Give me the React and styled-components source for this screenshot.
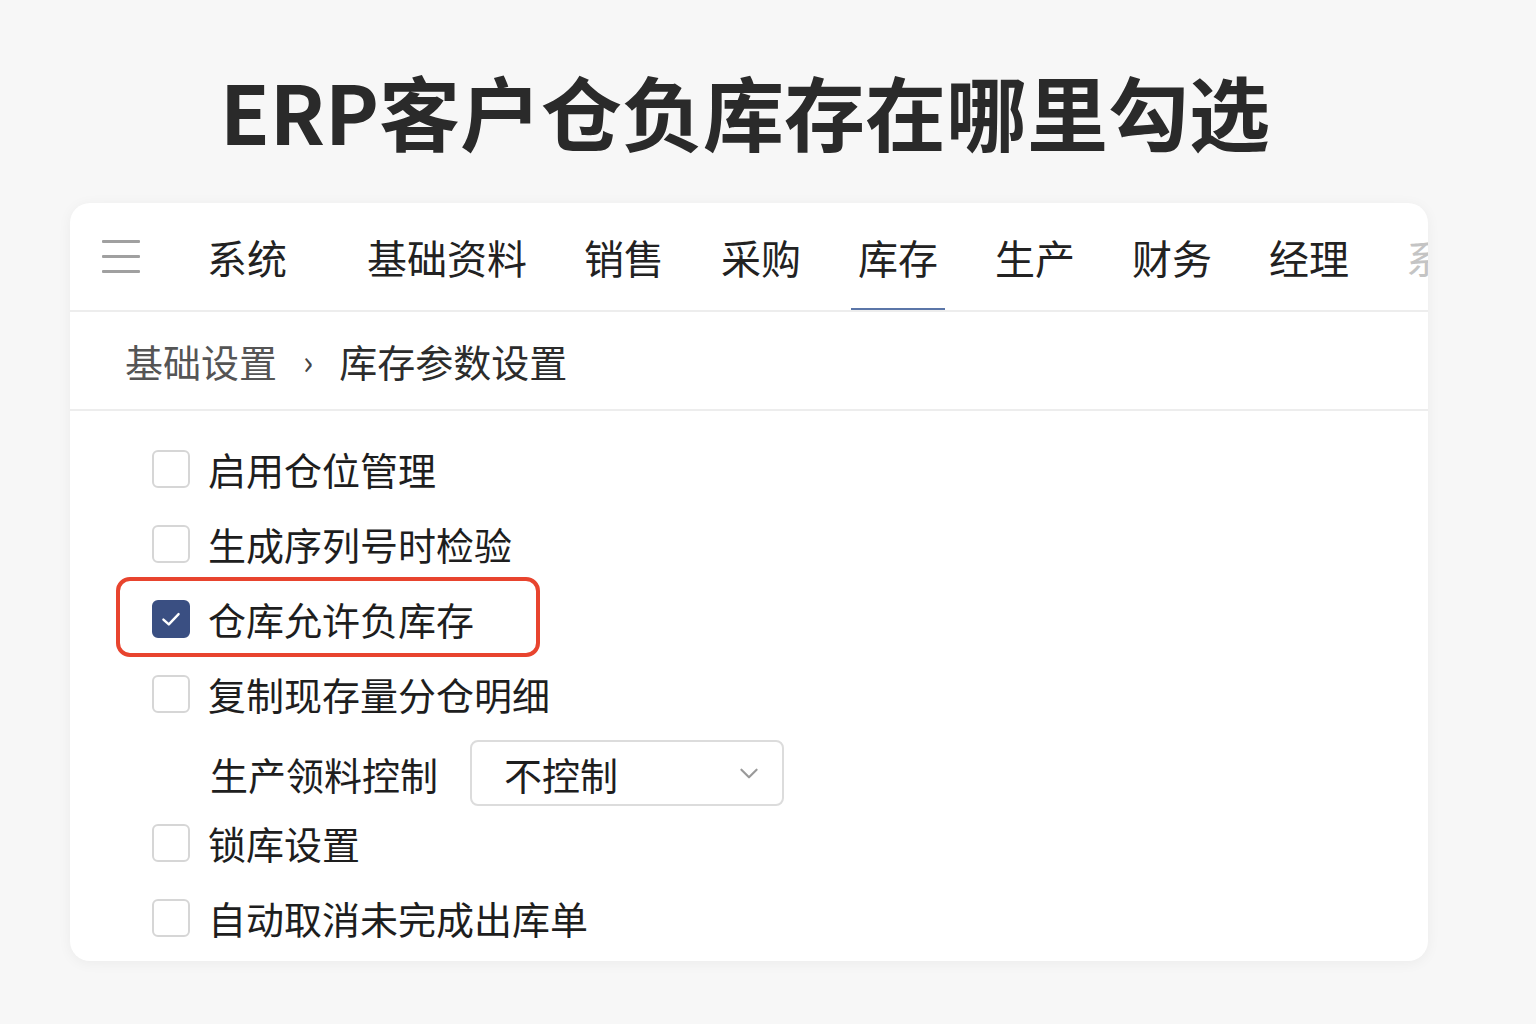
import React from 'react';
import styled, {createGlobalStyle} from 'styled-components';

const GlobalStyle = createGlobalStyle`
	body {
		margin: 0;
		background: #f7f7f7;
		font-family: "Noto Sans CJK SC", "Noto Sans", sans-serif;
		color: #222;
	}
`;

const tabs = ['系统', '基础资料', '销售', '采购', '库存', '生产', '财务', '经理'];

const options = [
	{label: '启用仓位管理'},
	{label: '生成序列号时检验'},
	{label: '仓库允许负库存', checked: true, marked: true},
	{label: '复制现存量分仓明细'},
	{select: true, label: '生产领料控制', value: '不控制'},
	{label: '锁库设置'},
	{label: '自动取消未完成出库单'},
];

const Check = ({checked}) => (
	<Box $checked={checked}>
		{checked && (
			<svg width='26' height='26' viewBox='0 0 24 24' fill='none' stroke='#fff' strokeWidth='2.2' strokeLinecap='round' strokeLinejoin='round'>
				<polyline points='5 12.5 10 17 19 7.5' />
			</svg>
		)}
	</Box>
);

const App = () => {
	return (
		<>
			<GlobalStyle />
			<Page>
				<Title>ERP客户仓负库存在哪里勾选</Title>
				<Card>
					<Nav>
						<Burger>
							<span />
							<span />
							<span />
						</Burger>
						<Tabs>
							{tabs.map((t, i) => (
								<Tab key={t} $active={t === '库存'} $first={i === 0}>
									{t}
								</Tab>
							))}
							<Tab $faded>系统</Tab>
						</Tabs>
					</Nav>
					<Crumbs>
						<CrumbParent>基础设置</CrumbParent>
						<Sep>›</Sep>
						<CrumbCurrent>库存参数设置</CrumbCurrent>
					</Crumbs>
					<List>
						{options.map((o) =>
							o.select ? (
								<SelectRow key={o.label}>
									<Label>{o.label}</Label>
									<Select>
										<span>{o.value}</span>
										<svg width='26' height='26' viewBox='0 0 24 24' fill='none' stroke='#9a9a9a' strokeWidth='2' strokeLinecap='round' strokeLinejoin='round'>
											<polyline points='5 9 12 16 19 9' />
										</svg>
									</Select>
								</SelectRow>
							) : (
								<Row key={o.label}>
									{o.marked && <Highlight />}
									<Check checked={o.checked} />
									<Label>{o.label}</Label>
								</Row>
							)
						)}
					</List>
				</Card>
			</Page>
		</>
	);
};

const Page = styled.div`
	width: 1358px;
	margin-left: 70px;
	padding-top: 62px;
	padding-bottom: 62px;
`;

const Title = styled.h1`
	margin: 0;
	text-align: center;
	font-size: 81px;
	line-height: 96px;
	font-weight: 700;
	color: #2a2a2a;
	padding-right: 8px;
`;

const Card = styled.div`
	margin-top: 45px;
	background: #fff;
	border-radius: 20px;
	box-shadow: 0 2px 14px rgba(0, 0, 0, 0.05);
	overflow: hidden;
`;

const Nav = styled.div`
	display: flex;
	align-items: center;
	height: 109px;
	padding-left: 32px;
	border-bottom: 2px solid #ededed;
	box-sizing: border-box;
	overflow: hidden;
`;

const Burger = styled.div`
	display: flex;
	flex-direction: column;
	justify-content: space-between;
	width: 38px;
	height: 33px;
	flex-shrink: 0;

	span {
		display: block;
		height: 3px;
		background: #a0a0a0;
		border-radius: 1px;
	}
`;

const Tabs = styled.div`
	display: flex;
	align-items: stretch;
	height: 100%;
	margin-left: 60px;
	gap: 43px;
`;

const Tab = styled.div`
	position: relative;
	display: flex;
	align-items: center;
	flex-shrink: 0;
	padding: 0 7px;
	margin-right: ${(p) => (p.$first ? '23px' : '0')};
	font-size: 40px;
	color: ${(p) => (p.$faded ? '#c4c4c4' : '#222')};

	&::after {
		content: '';
		display: ${(p) => (p.$active ? 'block' : 'none')};
		position: absolute;
		left: 0;
		right: 0;
		bottom: -2px;
		height: 4px;
		background: #5b76a8;
	}
`;

const Crumbs = styled.div`
	display: flex;
	align-items: center;
	height: 99px;
	padding-left: 55px;
	border-bottom: 2px solid #ededed;
	box-sizing: border-box;
	font-size: 38px;
`;

const CrumbParent = styled.span`
	color: #555;
`;

const Sep = styled.span`
	margin: 0 26px 0 26px;
	font-size: 34px;
	color: #444;
`;

const CrumbCurrent = styled.span`
	color: #2c2c2c;
`;

const List = styled.div`
	display: flex;
	flex-direction: column;
	padding: 20px 0 6px 82px;
`;

const Row = styled.div`
	position: relative;
	display: flex;
	align-items: center;
	height: 75px;
`;

const SelectRow = styled.div`
	display: flex;
	align-items: center;
	height: 74px;
	padding-top: 10px;
	padding-left: 40px;
	box-sizing: border-box;
`;

const Box = styled.div`
	display: flex;
	align-items: center;
	justify-content: center;
	width: 38px;
	height: 38px;
	box-sizing: border-box;
	border-radius: 6px;
	border: 2px solid ${(p) => (p.$checked ? '#3a4f82' : '#d6d6d6')};
	background: ${(p) => (p.$checked ? '#3a4f82' : '#fff')};
	flex-shrink: 0;
`;

const Label = styled.span`
	margin-left: 18px;
	font-size: 38px;
	color: #1e1e1e;
	white-space: nowrap;
`;

const Select = styled.div`
	display: flex;
	align-items: center;
	justify-content: space-between;
	width: 314px;
	height: 66px;
	margin-left: 32px;
	padding: 0 20px 0 32px;
	box-sizing: border-box;
	border: 2px solid #dcdcdc;
	border-radius: 8px;
	font-size: 38px;
	color: #1e1e1e;
`;

const Highlight = styled.div`
	position: absolute;
	left: -36px;
	top: -4px;
	width: 424px;
	height: 80px;
	box-sizing: border-box;
	border: 4px solid #e8442e;
	border-radius: 14px;
	pointer-events: none;
`;

export default App;
